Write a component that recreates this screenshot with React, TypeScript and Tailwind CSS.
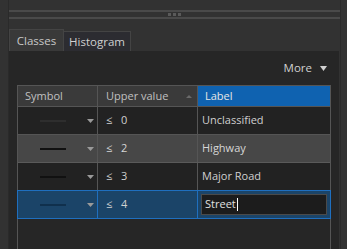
import React from "react";

const font = { fontFamily: '"Open Sans", "Noto Sans", sans-serif' };

function Caret() {
  return (
    <svg width="7" height="4" viewBox="0 0 7 4" className="fill-[#9a9a9a]">
      <path d="M0 0h7L3.5 4z" />
    </svg>
  );
}

function Row({
  bg,
  line,
  value,
  label,
  text,
  editing,
}: {
  bg: string;
  line: string;
  value: string;
  label: string;
  text: string;
  editing?: boolean;
}) {
  return (
    <div className={`flex h-[27px] ${bg}`}>
      <div className={`w-[80px] flex items-center border-r ${editing ? "border-[#1f6fbf]" : "border-[#555]"}`}>
        <div className={`ml-[22px] w-[26px] h-[2px] ${line}`} />
        <div className="ml-[21px] mt-[1px]">
          <Caret />
        </div>
      </div>
      <div className={`w-[100px] flex items-center pl-[8px] border-r ${editing ? "border-[#1f6fbf]" : "border-[#555]"} ${text}`}>
        <span className="w-[15px]">≤</span>
        <span>{value}</span>
      </div>
      <div className="flex-1 flex items-center">
        {editing ? (
          <div className="ml-[3px] mr-[3px] flex-1 h-[21px] bg-[#1c1c1c] border border-[#4a4a4a] flex items-center pl-[3px] text-[#e0e0e0]">
            Street<span className="inline-block w-[1px] h-[13px] bg-white ml-[1px]" />
          </div>
        ) : (
          <span className={`pl-[4px] ${text}`}>{label}</span>
        )}
      </div>
    </div>
  );
}

export default function App() {
  return (
    <div className="w-[347px] h-[249px] bg-[#323232] flex text-[11.5px]" style={font}>
      <div className="w-[9px] border-r border-[#2a2a2a]" />
      <div className="flex-1 flex flex-col">
        <div className="h-[29px] pt-[10px]">
          <div className="h-[2px] bg-[#4a4a4a]" />
          <div className="h-[5px] flex justify-center items-center gap-[2px]">
            <div className="w-[3px] h-[3px] bg-[#5a5a5a]" />
            <div className="w-[3px] h-[3px] bg-[#5a5a5a]" />
            <div className="w-[3px] h-[3px] bg-[#5a5a5a]" />
          </div>
          <div className="h-[2px] bg-[#4a4a4a]" />
        </div>
        <div className="flex items-end h-[22px]">
          <div className="w-[55px] h-[22px] bg-[#393939] border-t border-l border-r border-[#444] flex items-center justify-center text-[#c8c8c8]">
            Classes
          </div>
          <div className="w-[67px] h-[20px] bg-[#2c2c31] border-t border-r border-[#444] flex items-center justify-center text-[#d0d0d0]">
            Histogram
          </div>
        </div>
        <div className="flex-1 bg-[#262626] flex flex-col pl-[8px] pr-[8px] mr-[1px] text-[11px]">
          <div className="h-[34px] flex items-center justify-end pr-[4px] text-[#d0d0d0] text-[11.5px]">
            <span className="mr-[8px]">More</span>
            <svg width="7" height="5" viewBox="0 0 7 5" className="fill-[#d0d0d0]">
              <path d="M0 0h7L3.5 5z" />
            </svg>
          </div>
          <div className="flex-1 border-l border-r border-[#555] flex flex-col">
            <div className="flex h-[22px] bg-[#3a3a3a] border-t border-b border-[#555] text-[#c0c0c0]">
              <div className="w-[80px] border-r border-[#555] flex items-center pl-[7px]">Symbol</div>
              <div className="w-[100px] border-r border-[#555] flex items-center pl-[8px] justify-between pr-[5px]">
                <span>Upper value</span>
                <svg width="6" height="3" viewBox="0 0 6 3" className="fill-[#6a6a6a]">
                  <path d="M0 3h6L3 0z" />
                </svg>
              </div>
              <div className="flex-1 bg-[#0f62b0] flex items-center pl-[7px] text-[#e6e6e6]">Label</div>
            </div>
            <div className="border-b border-[#555]">
              <Row bg="bg-[#222]" line="bg-[#2e2e2e]" value="0" label="Unclassified" text="text-[#d0d0d0]" />
            </div>
            <div className="border-b border-[#5a5a5a]">
              <Row bg="bg-[#474747]" line="bg-[#111]" value="2" label="Highway" text="text-[#d6d6d6]" />
            </div>
            <div className="border-b border-[#3a3a3a]">
              <Row bg="bg-[#222]" line="bg-[#111]" value="3" label="Major Road" text="text-[#d0d0d0]" />
            </div>
            <div className="border border-[#1f6fbf] -ml-[1px] -mr-[1px] -mt-[1px]">
              <Row bg="bg-[#1b4468]" line="bg-[#10304d]" value="4" label="Street" text="text-[#d0d0d0]" editing />
            </div>
          </div>
        </div>
      </div>
      <div className="w-[7px] border-l border-[#2a2a2a] bg-[#333]" />
    </div>
  );
}
